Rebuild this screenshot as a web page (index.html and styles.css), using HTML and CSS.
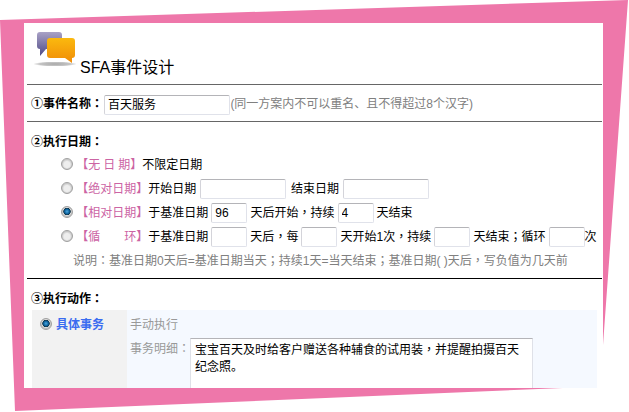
FILE: index.html
```html
<!DOCTYPE html>
<html lang="zh-CN">
<head>
<meta charset="utf-8">
<title>SFA事件设计</title>
<link rel="stylesheet" href="styles.css">
</head>
<body>
<div class="stage">
  <svg class="backdrop" width="629" height="412" viewBox="0 0 629 412"><polygon points="0,20 628,0 603,345 603,387 575,387.5 15,411" fill="#ee77aa"/></svg>
  <main class="card">
    <header class="head">
      <svg class="logo" width="46" height="40" viewBox="0 0 46 40">
        <defs>
          <linearGradient id="pu" x1="0" y1="0" x2="0" y2="1"><stop offset="0" stop-color="#a9a2c6"/><stop offset="1" stop-color="#4f4a86"/></linearGradient>
          <linearGradient id="or" x1="0" y1="0" x2="0" y2="1"><stop offset="0" stop-color="#fbb90e"/><stop offset="1" stop-color="#f08c08"/></linearGradient>
          <radialGradient id="sh"><stop offset="0" stop-color="#a8a8a8"/><stop offset="0.7" stop-color="#c4c4c4"/><stop offset="1" stop-color="#fff"/></radialGradient>
        </defs>
        <ellipse cx="23" cy="35" rx="22" ry="2.500" fill="url(#sh)"/>
        <path d="M8 3h19a3 3 0 0 1 3 3v11a3 3 0 0 1-3 3H14l-6 7v-7a3 3 0 0 1-3-3V6a3 3 0 0 1 3-3z" fill="url(#pu)"/>
        <path d="M18 9h22a3 3 0 0 1 3 3v14a3 3 0 0 1-3 3l0 5-7-5H18a3 3 0 0 1-3-3V12a3 3 0 0 1 3-3z" fill="url(#or)"/>
      </svg>
      <h1 class="title">SFA事件设计</h1>
    </header>

    <section class="name-row">
      <b class="lead">①事件名称<span class="p" lang="zh-TW">：</span></b><input class="field w-name" type="text" value="百天服务"> <span class="hint">(同一方案内不可以重名、且不得超过8个汉字)</span>
    </section>

    <section class="dates">
      <h2 class="lead heading">②执行日期<span class="p" lang="zh-TW">：</span></h2>
      <div class="opt"><input class="radio" type="radio" name="d"><span class="tag">【无 日 期】</span>不限定日期</div>
      <div class="opt opt-abs"><input class="radio" type="radio" name="d"><span class="tag">【绝对日期】</span>开始日期 <input class="field w-date" type="text"><span class="end">结束日期</span> <input class="field w-date" type="text"></div>
      <div class="opt"><input class="radio" type="radio" name="d" checked><span class="tag">【相对日期】</span>于基准日期 <input class="field w-num" type="text" value="96"> 天后开始<span class="p" lang="zh-TW">，</span>持续 <input class="field w-num" type="text" value="4"> 天结束</div>
      <div class="opt"><input class="radio" type="radio" name="d"><span class="tag tag-wide"><span>【循</span><span>环】</span></span>于基准日期 <input class="field w-num" type="text"> 天后<span class="p" lang="zh-TW">，</span>每 <input class="field w-num" type="text"> 天开始1次<span class="p" lang="zh-TW">，</span>持续 <input class="field w-num" type="text"> 天结束<span class="p" lang="zh-TW">；</span>循环 <input class="field w-num" type="text">次</div>
      <p class="note">说明<span class="p" lang="zh-TW">：</span>基准日期0天后=基准日期当天<span class="p" lang="zh-TW">；</span>持续1天=当天结束<span class="p" lang="zh-TW">；</span>基准日期( )天后<span class="p" lang="zh-TW">，</span>写负值为几天前</p>
    </section>

    <section class="actions">
      <h2 class="lead heading">③执行动作<span class="p" lang="zh-TW">：</span></h2>
      <div class="panel">
        <div class="side"><input class="radio" type="radio" name="a" checked><b class="kind">具体事务</b></div>
        <div class="detail">
          <div class="manual">手动执行</div>
          <div class="memo-row">
            <span class="memo-label">事务明细<span class="p" lang="zh-TW">：</span></span>
            <div class="memo">宝宝百天及时给客户赠送各种辅食的试用装<span class="p" lang="zh-TW">，</span>并提醒拍摄百天纪念照。</div>
          </div>
        </div>
      </div>
    </section>
  </main>
</div>
</body>
</html>
```
FILE: styles.css
```css
* { box-sizing: border-box; }
html, body { margin: 0; padding: 0; background: #fff; overflow: hidden; }
body {
  font-family: "Liberation Sans", "Noto Sans CJK SC", sans-serif;
  font-size: 12px;
  color: #000;
}
.stage { position: relative; width: 629px; height: 412px; padding: 23px 0 0 24px; }
.backdrop { position: absolute; left: 0; top: 0; }
.card {
  position: relative;
  width: 579px;
  height: 365px;
  padding: 0 1px 0 3px;
  background: #fff;
  overflow: hidden;
}
.p { font-family: "Liberation Sans", "Noto Sans CJK TC", sans-serif; }
.head {
  display: flex;
  align-items: flex-start;
  height: 62px;
  padding: 6px 0 0 5px;
  border-bottom: 1px solid #666;
}
.logo { flex: none; }
.title {
  margin: 29px 0 0 2px;
  font-size: 16px;
  line-height: 20px;
  font-weight: normal;
}
.name-row {
  height: 37px;
  padding: 9px 0 0 4px;
  line-height: 20px;
  border-bottom: 1px solid #666;
}
.name-row .field { margin-left: 1px; }
.lead { font-weight: bold; }
.hint { color: #808080; margin-left: -3px; }
.field {
  height: 20px;
  padding: 0 3px;
  margin: 0;
  font: inherit;
  color: #000;
  vertical-align: middle;
  background: #fff;
  border: 1px solid #e0e2ea;
  border-top-color: #b4b4b8;
  border-left-color: #d4d4da;
  border-radius: 2px;
  outline: none;
}
.w-name { width: 126px; }
.w-date { width: 86px; }
.w-num { width: 36px; }
.end { margin-left: 5px; }
.dates { padding: 8px 0 6px; border-bottom: 1px solid #000; }
.heading {
  margin: 0 0 -2px;
  padding-left: 4px;
  font-size: 12px;
  line-height: 24px;
}
.opt { height: 24px; padding-left: 34px; line-height: 26px; white-space: nowrap; word-spacing: -.25px; }
.opt-abs { word-spacing: .5px; }
.opt .field { margin-top: -2px; }
.radio {
  appearance: none;
  width: 12px;
  height: 12px;
  margin: -4px 3.200px 0 0;
  vertical-align: middle;
  border: 1px solid #a0a0a0;
  border-radius: 50%;
  background: radial-gradient(circle at 50% 55%, #eee 0 3px, #c8c8c8 5px, #e8e8e8 6px);
}
.radio:checked {
  background: radial-gradient(circle at 50% 45%, #4aa8e0 0, #0a5c96 2.500px, #134 3.400px, #ddd 4px, #bbb 5px, #e8e8e8 6px);
}
.tag { color: #cc64a4; }
.tag-wide { display: inline-flex; justify-content: space-between; width: 72px; }
.note { margin: 0; height: 24px; padding-left: 46px; line-height: 26px; color: #808080; }
.actions { padding-top: 8px; }
.panel { display: flex; height: 100px; margin: 1px 0 0 5px; width: 565px; }
.side { flex: none; width: 95px; padding: 7px 0 0 8px; line-height: 16px; background: #f2f2f2; }
.kind { color: #3a6cf0; font-size: 12px; margin-left: .8px; }
.detail { flex: 1; padding: 7px 0 0 3px; background: #f5f9ff; color: #999; }
.manual { line-height: 16px; }
.memo-row { display: flex; margin-top: 5px; }
.memo-label { flex: none; width: 60px; padding-top: 3px; line-height: 16px; white-space: nowrap; }
.memo {
  width: 343px;
  height: 70px;
  padding: 3px 4px;
  line-height: 17px;
  color: #000;
  background: #fff;
  border: 1px solid #dfe1e8;
  border-top-color: #b4b4b8;
}
```
